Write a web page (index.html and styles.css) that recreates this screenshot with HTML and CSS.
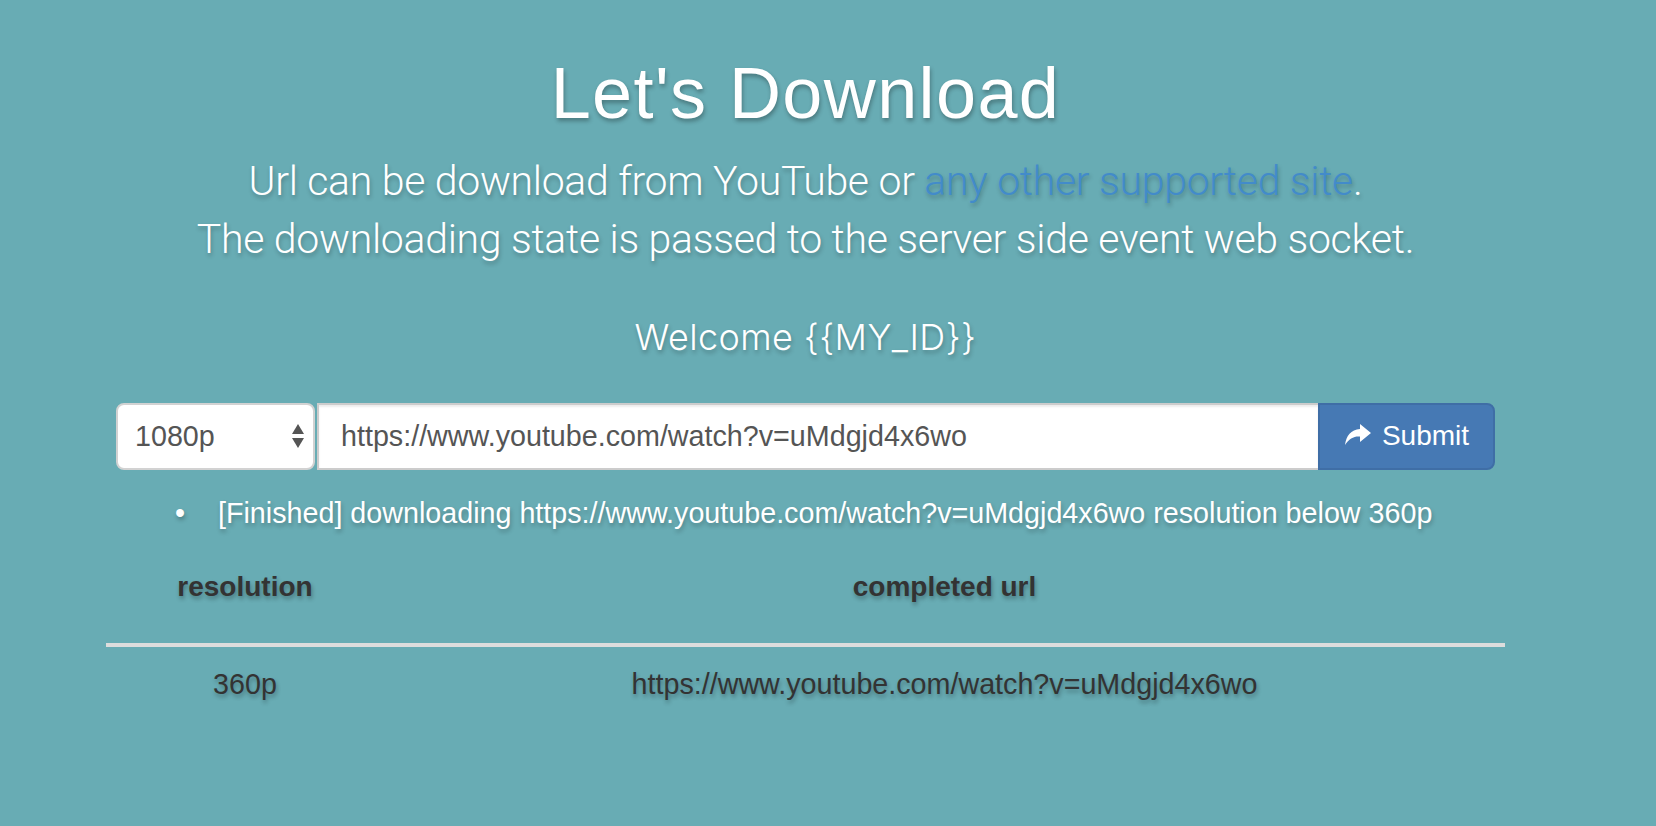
FILE: index.html
```html
<!DOCTYPE html>
<html lang="en">
<head>
<meta charset="utf-8">
<title>Let's Download</title>
<link rel="stylesheet" href="styles.css">
</head>
<body>
<div class="page">
  <header class="intro">
    <h1 class="title">Let's Download</h1>
    <p class="lead">Url can be download from YouTube or <a class="link" href="#">any other supported site</a>.<br>The downloading state is passed to the server side event web socket.</p>
    <h4 class="welcome">Welcome {{MY_ID}}</h4>
  </header>

  <form class="download-form">
    <div class="select-box">
      <span class="select-value">1080p</span>
      <svg class="select-arrows" width="14" height="26" viewBox="0 0 14 26"><path d="M7 1 L13 11 L1 11 Z" fill="#555"/><path d="M1 15 L13 15 L7 25 Z" fill="#555"/></svg>
    </div>
    <div class="url-input">https://www.youtube.com/watch?v=uMdgjd4x6wo</div>
    <button class="submit-btn" type="button">
      <svg class="share-icon" width="28" height="24" viewBox="0 0 28 24"><path d="M16 1 L27 10 L16 19 L16 13.5 C10 13 5 15.5 1 22 C2 13 7 6.5 16 6 Z" fill="#fff"/></svg>
      <span>Submit</span>
    </button>
  </form>

  <ul class="status-list">
    <li class="status-item">[Finished] downloading https://www.youtube.com/watch?v=uMdgjd4x6wo resolution below 360p</li>
  </ul>

  <table class="results">
    <thead>
      <tr><th class="col-res">resolution</th><th class="col-url">completed url</th></tr>
    </thead>
    <tbody>
      <tr><td>360p</td><td>https://www.youtube.com/watch?v=uMdgjd4x6wo</td></tr>
    </tbody>
  </table>
</div>
</body>
</html>
```

FILE: styles.css
```css
* { box-sizing: border-box; }

body {
  margin: 0;
  background: #68acb4;
  font-family: "Liberation Sans", Arial, sans-serif;
  font-size: 28.7px;
  line-height: 40px;
  color: #333;
}

.page {
  width: 1399px;
  margin-left: 106px;
  padding-top: 54px;
}

.intro {
  text-align: center;
  color: #fff;
}

.title {
  margin: 0;
  font-size: 72px;
  line-height: 1.1;
  font-weight: 400;
  letter-spacing: 1.4px;
  text-shadow: 1px 3px 4px rgba(0, 0, 0, 0.3);
}

.lead {
  margin: 19px 0 0;
  font-family: Roboto, sans-serif;
  font-weight: 300;
  font-size: 41px;
  letter-spacing: -0.3px;
  line-height: 58px;
  text-shadow: 1px 3px 4px rgba(0, 0, 0, 0.25);
}

.link {
  color: #428bca;
  text-decoration: none;
}

.welcome {
  margin: 50px 0 0;
  font-family: Inter, sans-serif;
  font-weight: 300;
  font-size: 36px;
  letter-spacing: 0.4px;
  line-height: 1.1;
  text-shadow: 1px 3px 4px rgba(0, 0, 0, 0.25);
}

.download-form {
  display: flex;
  margin: 45px 10px 0;
  height: 67px;
}

.select-box {
  width: 199px;
  flex: none;
  display: flex;
  align-items: center;
  justify-content: space-between;
  background: #fff;
  border: 2px solid #d2d2d2;
  border-radius: 8px;
  padding: 0 8px 0 17px;
  color: #555;
  margin-right: 2px;
}

.url-input {
  flex: 1;
  display: flex;
  align-items: center;
  background: #fff;
  border: 2px solid #ccc;
  border-right: none;
  box-shadow: inset 0 2px 2px rgba(0, 0, 0, 0.075);
  padding: 0 22px;
  color: #555;
}

.submit-btn {
  width: 177px;
  flex: none;
  display: flex;
  align-items: center;
  justify-content: center;
  gap: 10px;
  background: #4679b4;
  border: 2px solid #3f6ea6;
  border-radius: 0 8px 8px 0;
  color: #fff;
  font-family: "Liberation Sans", Arial, sans-serif;
  font-size: 28px;
  padding: 0;
}

.share-icon { margin-top: -2px; }

.status-list {
  list-style: none;
  margin: 23px 0 18px;
  padding-left: 69px;
  color: #fff;
  text-shadow: 1px 3px 4px rgba(0, 0, 0, 0.25);
}

.status-item {
  display: flex;
}

.status-item::before {
  content: "\2022";
  flex: none;
  width: 43px;
}

.results {
  width: 100%;
  border-collapse: collapse;
  text-shadow: 1px 3px 4px rgba(0, 0, 0, 0.3);
}

.results th,
.results td {
  text-align: center;
  padding: 16px;
}

.results th {
  font-weight: 700;
  font-size: 28px;
  padding-bottom: 36px;
  border-bottom: 4px solid #ddd;
}

.results td {
  padding-top: 17px;
}

.col-res { width: 278px; }
```
